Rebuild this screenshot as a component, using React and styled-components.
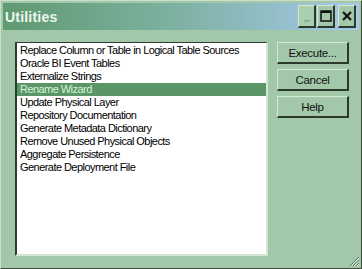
import React, { useState } from 'react';
import styled, { createGlobalStyle } from 'styled-components';

const GlobalStyle = createGlobalStyle`
  html, body {
    margin: 0;
    padding: 0;
    background: #a3c8a9;
  }
  * {
    box-sizing: border-box;
  }
`;

const Window = styled.div`
  width: 362px;
  height: 269px;
  background: #a3c8a9;
  border-top: 1px solid #c9e0cd;
  border-left: 1px solid #c9e0cd;
  border-right: 1px solid #3e4c40;
  border-bottom: 1px solid #3e4c40;
  padding: 2px;
  display: flex;
  flex-direction: column;
  position: relative;
  font-family: 'Liberation Sans', Arial, sans-serif;
`;

const TitleBar = styled.div`
  height: 27px;
  display: flex;
  align-items: center;
  padding: 0 3px 0 2px;
  background: linear-gradient(to right, #5f9a70 0%, #7fb2a4 50%, #a5c9ea 100%);
`;

const Title = styled.div`
  flex: 1;
  color: #eef6ee;
  font-weight: bold;
  font-size: 14px;
  letter-spacing: 0.2px;
`;

const TitleButtons = styled.div`
  display: flex;
  gap: 1px;
`;

const CaptionButton = styled.div`
  width: 18px;
  height: 23px;
  background: ${(p) => (p.dim ? '#a8d0ae' : '#a3c8a9')};
  border-top: 1px solid #d4e8d6;
  border-left: 1px solid #d4e8d6;
  border-right: 2px solid #2c3a2e;
  border-bottom: 2px solid #2c3a2e;
  display: flex;
  align-items: center;
  justify-content: center;
  margin-left: ${(p) => (p.gap ? '2px' : '0')};
`;

const Body = styled.div`
  flex: 1;
  display: flex;
  padding: 12px 0 0 12px;
`;

const ListBox = styled.div`
  width: 253px;
  height: 214px;
  background: #ffffff;
  border-top: 1px solid #2e3c30;
  border-left: 2px solid #2e3c30;
  border-right: 2px solid #d2e6d4;
  border-bottom: 2px solid #d2e6d4;
  padding-top: 1px;
`;

const Item = styled.div`
  height: 13px;
  line-height: 13px;
  font-size: 11px;
  letter-spacing: -0.55px;
  padding-left: 3px;
  white-space: nowrap;
  color: ${(p) => (p.selected ? '#d6f2d8' : '#000')};
  background: ${(p) => (p.selected ? '#5a9668' : 'transparent')};
  cursor: default;
`;

const ButtonColumn = styled.div`
  display: flex;
  flex-direction: column;
  gap: 5px;
  margin-left: 9px;
`;

const Button = styled.div`
  width: 72px;
  height: 22px;
  background: #a3c8a9;
  border-top: 1px solid #d4e8d6;
  border-left: 1px solid #d4e8d6;
  border-right: 2px solid #2c3a2e;
  border-bottom: 2px solid #2c3a2e;
  font-size: 11.5px;
  letter-spacing: -0.3px;
  color: #111;
  display: flex;
  align-items: center;
  justify-content: center;
`;

const Grip = styled.svg`
  position: absolute;
  right: 1px;
  bottom: 1px;
`;

const items = [
  'Replace Column or Table in Logical Table Sources',
  'Oracle BI Event Tables',
  'Externalize Strings',
  'Rename Wizard',
  'Update Physical Layer',
  'Repository Documentation',
  'Generate Metadata Dictionary',
  'Remove Unused Physical Objects',
  'Aggregate Persistence',
  'Generate Deployment File',
];

export default function App() {
  const [selected, setSelected] = useState(3);

  return (
    <>
      <GlobalStyle />
      <Window>
        <TitleBar>
          <Title>Utilities</Title>
          <TitleButtons>
            <CaptionButton dim>
              <svg width="8" height="14" viewBox="0 0 8 14">
                <rect x="1" y="11" width="6" height="1.5" fill="#8aa890" />
              </svg>
            </CaptionButton>
            <CaptionButton>
              <svg width="12" height="12" viewBox="0 0 12 12">
                <rect x="1" y="1" width="10" height="10" fill="none" stroke="#111" strokeWidth="1.5" />
                <rect x="1" y="1" width="10" height="2" fill="#111" />
              </svg>
            </CaptionButton>
            <CaptionButton gap>
              <svg width="12" height="12" viewBox="0 0 12 12">
                <path d="M2 2 L10 10 M10 2 L2 10" stroke="#111" strokeWidth="2.2" />
              </svg>
            </CaptionButton>
          </TitleButtons>
        </TitleBar>
        <Body>
          <ListBox>
            {items.map((item, i) => (
              <Item key={item} selected={i === selected} onClick={() => setSelected(i)}>
                {item}
              </Item>
            ))}
          </ListBox>
          <ButtonColumn>
            <Button>Execute...</Button>
            <Button>Cancel</Button>
            <Button>Help</Button>
          </ButtonColumn>
        </Body>
        <Grip width="12" height="12" viewBox="0 0 12 12">
          <path d="M11 2 L2 11 M11 5 L5 11 M11 8 L8 11" stroke="#5c7260" strokeWidth="1" />
          <path d="M11 3 L3 11 M11 6 L6 11 M11 9 L9 11" stroke="#e0efe2" strokeWidth="1" />
        </Grip>
      </Window>
    </>
  );
}
